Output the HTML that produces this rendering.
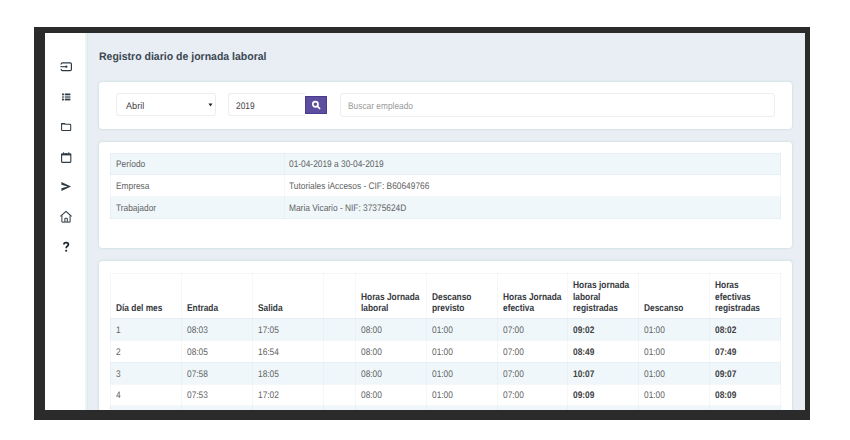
<!DOCTYPE html>
<html>
<head>
<meta charset="utf-8">
<style>
html,body{margin:0;padding:0;}
body{width:850px;height:440px;background:#fff;position:relative;overflow:hidden;font-family:"Liberation Sans",sans-serif;}
.frame{position:absolute;left:34px;top:27px;width:776px;height:393px;background:#2b2b2b;}
.inner{position:absolute;left:45px;top:33px;width:760px;height:377px;background:#e9eef5;overflow:hidden;}
.pg{position:absolute;left:-45px;top:-33px;width:850px;height:440px;}
.side{position:absolute;left:45px;top:33px;width:43px;height:377px;background:#fff;border-right:1px solid #dfe8ea;box-shadow:inset -2px 0 0 #eef3f4;box-sizing:border-box;}
.r{position:absolute;box-sizing:border-box;}
.t{position:absolute;white-space:nowrap;text-rendering:geometricPrecision;}
</style>
</head>
<body>
<div class="frame"></div>
<div class="inner"><div class="pg">
<div class="side"></div>
<div class="r" style="left:98px;top:81px;width:695px;height:49px;background:#fff;border:1px solid #dbe6e9;border-radius:4px;box-shadow:0 0 0 1px #e2ebee;"></div>
<div class="r" style="left:98px;top:141px;width:695px;height:108px;background:#fff;border:1px solid #dbe6e9;border-radius:4px;box-shadow:0 0 0 1px #e2ebee;"></div>
<div class="r" style="left:98px;top:260px;width:695px;height:200px;background:#fff;border:1px solid #dbe6e9;border-radius:4px;box-shadow:0 0 0 1px #e2ebee;"></div>
<div class="t" style="left:98.50px;top:51.59px;font-size:11px;line-height:11px;font-weight:bold;color:#3b4752;transform:scaleX(0.955);transform-origin:0 0;">Registro diario de jornada laboral</div>
<div class="r" style="left:116px;top:93px;width:100px;height:23px;background:#fff;border:1px solid #ededed;border-radius:3px;"></div>
<div class="t" style="left:126.00px;top:101.56px;font-size:9.5px;line-height:9.5px;font-weight:normal;color:#444;transform:scaleX(0.96);transform-origin:0 0;">Abril</div>
<svg class="r" style="left:208px;top:103px" width="5" height="4" viewBox="0 0 5 4"><path d="M0.5 0.5 L4.5 0.5 L2.5 3.5 Z" fill="#222"/></svg>
<div class="r" style="left:228px;top:93px;width:77px;height:23px;background:#fff;border:1px solid #ededed;border-right:none;border-radius:3px 0 0 3px;"></div>
<div class="t" style="left:236.00px;top:101.56px;font-size:9.5px;line-height:9.5px;font-weight:normal;color:#444;transform:scaleX(0.879);transform-origin:0 0;">2019</div>
<div class="r" style="left:305px;top:96px;width:22px;height:18px;background:#5d4d9e;border:1px solid #4b3b8e;"></div>
<svg class="r" style="left:310px;top:99px" width="12" height="12" viewBox="0 0 12 12"><circle cx="5.4" cy="5.3" r="2.6" fill="none" stroke="#fff" stroke-width="1.7"/><path d="M7.3 7.2 L9.6 9.5" stroke="#fff" stroke-width="1.7" stroke-linecap="round"/></svg>
<div class="r" style="left:339.5px;top:93px;width:435px;height:23.5px;background:#fff;border:1px solid #ededed;border-radius:3px;"></div>
<div class="t" style="left:347.60px;top:101.56px;font-size:9.5px;line-height:9.5px;font-weight:normal;color:#9a9a9a;transform:scaleX(0.879);transform-origin:0 0;">Buscar empleado</div>
<div class="r" style="left:110px;top:153px;width:671px;height:22px;background:#eff7fa;"></div>
<div class="r" style="left:110px;top:175px;width:671px;height:22px;background:#fff;"></div>
<div class="r" style="left:110px;top:197px;width:671px;height:22px;background:#eff7fa;"></div>
<div class="r" style="left:110px;top:153px;width:671px;height:1px;background:rgba(196,212,220,0.17);"></div>
<div class="r" style="left:110px;top:174px;width:671px;height:1px;background:rgba(196,212,220,0.17);"></div>
<div class="r" style="left:110px;top:196px;width:671px;height:1px;background:rgba(196,212,220,0.17);"></div>
<div class="r" style="left:110px;top:218px;width:671px;height:1px;background:rgba(196,212,220,0.17);"></div>
<div class="r" style="left:110px;top:153px;width:1px;height:66px;background:rgba(196,212,220,0.17);"></div>
<div class="r" style="left:284px;top:153px;width:1px;height:66px;background:rgba(196,212,220,0.17);"></div>
<div class="r" style="left:780px;top:153px;width:1px;height:66px;background:rgba(196,212,220,0.17);"></div>
<div class="t" style="left:115.70px;top:160.36px;font-size:9.5px;line-height:9.5px;font-weight:normal;color:#626262;transform:scaleX(0.879);transform-origin:0 0;">Período</div>
<div class="t" style="left:289.40px;top:160.36px;font-size:9.5px;line-height:9.5px;font-weight:normal;color:#626262;transform:scaleX(0.879);transform-origin:0 0;">01-04-2019 a 30-04-2019</div>
<div class="t" style="left:115.70px;top:182.36px;font-size:9.5px;line-height:9.5px;font-weight:normal;color:#626262;transform:scaleX(0.879);transform-origin:0 0;">Empresa</div>
<div class="t" style="left:289.40px;top:182.36px;font-size:9.5px;line-height:9.5px;font-weight:normal;color:#626262;transform:scaleX(0.879);transform-origin:0 0;">Tutoriales iAccesos - CIF: B60649766</div>
<div class="t" style="left:115.70px;top:204.36px;font-size:9.5px;line-height:9.5px;font-weight:normal;color:#626262;transform:scaleX(0.879);transform-origin:0 0;">Trabajador</div>
<div class="t" style="left:289.40px;top:204.36px;font-size:9.5px;line-height:9.5px;font-weight:normal;color:#626262;transform:scaleX(0.879);transform-origin:0 0;">Maria Vicario - NIF: 37375624D</div>
<div class="r" style="left:110px;top:318px;width:671px;height:23px;background:#eff7fa;"></div>
<div class="r" style="left:110px;top:340px;width:671px;height:23px;background:#fff;"></div>
<div class="r" style="left:110px;top:362px;width:671px;height:23px;background:#eff7fa;"></div>
<div class="r" style="left:110px;top:384px;width:671px;height:23px;background:#fff;"></div>
<div class="r" style="left:110px;top:406px;width:671px;height:23px;background:#eff7fa;"></div>
<div class="r" style="left:110px;top:273px;width:671px;height:1px;background:rgba(196,212,220,0.17);"></div>
<div class="r" style="left:110px;top:318px;width:671px;height:1px;background:rgba(196,212,220,0.17);"></div>
<div class="r" style="left:110px;top:340px;width:671px;height:1px;background:rgba(196,212,220,0.17);"></div>
<div class="r" style="left:110px;top:362px;width:671px;height:1px;background:rgba(196,212,220,0.17);"></div>
<div class="r" style="left:110px;top:384px;width:671px;height:1px;background:rgba(196,212,220,0.17);"></div>
<div class="r" style="left:110px;top:405px;width:671px;height:1px;background:rgba(196,212,220,0.17);"></div>
<div class="r" style="left:110px;top:273px;width:1px;height:200px;background:rgba(196,212,220,0.17);"></div>
<div class="r" style="left:181px;top:273px;width:1px;height:200px;background:rgba(196,212,220,0.17);"></div>
<div class="r" style="left:252px;top:273px;width:1px;height:200px;background:rgba(196,212,220,0.17);"></div>
<div class="r" style="left:323px;top:273px;width:1px;height:200px;background:rgba(196,212,220,0.17);"></div>
<div class="r" style="left:355px;top:273px;width:1px;height:200px;background:rgba(196,212,220,0.17);"></div>
<div class="r" style="left:426px;top:273px;width:1px;height:200px;background:rgba(196,212,220,0.17);"></div>
<div class="r" style="left:497px;top:273px;width:1px;height:200px;background:rgba(196,212,220,0.17);"></div>
<div class="r" style="left:567px;top:273px;width:1px;height:200px;background:rgba(196,212,220,0.17);"></div>
<div class="r" style="left:638px;top:273px;width:1px;height:200px;background:rgba(196,212,220,0.17);"></div>
<div class="r" style="left:709px;top:273px;width:1px;height:200px;background:rgba(196,212,220,0.17);"></div>
<div class="r" style="left:780px;top:273px;width:1px;height:200px;background:rgba(196,212,220,0.17);"></div>
<div class="t" style="left:115.50px;top:304.10px;font-size:9.8px;line-height:9.8px;font-weight:bold;color:#34383c;transform:scaleX(0.852);transform-origin:0 0;">Día del mes</div>
<div class="t" style="left:186.50px;top:304.10px;font-size:9.8px;line-height:9.8px;font-weight:bold;color:#34383c;transform:scaleX(0.852);transform-origin:0 0;">Entrada</div>
<div class="t" style="left:257.50px;top:304.10px;font-size:9.8px;line-height:9.8px;font-weight:bold;color:#34383c;transform:scaleX(0.852);transform-origin:0 0;">Salida</div>
<div class="t" style="left:360.50px;top:292.70px;font-size:9.8px;line-height:9.8px;font-weight:bold;color:#34383c;transform:scaleX(0.852);transform-origin:0 0;">Horas Jornada</div>
<div class="t" style="left:360.50px;top:304.10px;font-size:9.8px;line-height:9.8px;font-weight:bold;color:#34383c;transform:scaleX(0.852);transform-origin:0 0;">laboral</div>
<div class="t" style="left:431.50px;top:292.70px;font-size:9.8px;line-height:9.8px;font-weight:bold;color:#34383c;transform:scaleX(0.852);transform-origin:0 0;">Descanso</div>
<div class="t" style="left:431.50px;top:304.10px;font-size:9.8px;line-height:9.8px;font-weight:bold;color:#34383c;transform:scaleX(0.852);transform-origin:0 0;">previsto</div>
<div class="t" style="left:502.50px;top:292.70px;font-size:9.8px;line-height:9.8px;font-weight:bold;color:#34383c;transform:scaleX(0.852);transform-origin:0 0;">Horas Jornada</div>
<div class="t" style="left:502.50px;top:304.10px;font-size:9.8px;line-height:9.8px;font-weight:bold;color:#34383c;transform:scaleX(0.852);transform-origin:0 0;">efectiva</div>
<div class="t" style="left:572.50px;top:281.30px;font-size:9.8px;line-height:9.8px;font-weight:bold;color:#34383c;transform:scaleX(0.852);transform-origin:0 0;">Horas jornada</div>
<div class="t" style="left:572.50px;top:292.70px;font-size:9.8px;line-height:9.8px;font-weight:bold;color:#34383c;transform:scaleX(0.852);transform-origin:0 0;">laboral</div>
<div class="t" style="left:572.50px;top:304.10px;font-size:9.8px;line-height:9.8px;font-weight:bold;color:#34383c;transform:scaleX(0.852);transform-origin:0 0;">registradas</div>
<div class="t" style="left:643.50px;top:304.10px;font-size:9.8px;line-height:9.8px;font-weight:bold;color:#34383c;transform:scaleX(0.852);transform-origin:0 0;">Descanso</div>
<div class="t" style="left:714.50px;top:281.30px;font-size:9.8px;line-height:9.8px;font-weight:bold;color:#34383c;transform:scaleX(0.852);transform-origin:0 0;">Horas</div>
<div class="t" style="left:714.50px;top:292.70px;font-size:9.8px;line-height:9.8px;font-weight:bold;color:#34383c;transform:scaleX(0.852);transform-origin:0 0;">efectivas</div>
<div class="t" style="left:714.50px;top:304.10px;font-size:9.8px;line-height:9.8px;font-weight:bold;color:#34383c;transform:scaleX(0.852);transform-origin:0 0;">registradas</div>
<div class="t" style="left:115.50px;top:325.96px;font-size:9.5px;line-height:9.5px;font-weight:normal;color:#626262;transform:scaleX(0.879);transform-origin:0 0;">1</div>
<div class="t" style="left:186.50px;top:325.96px;font-size:9.5px;line-height:9.5px;font-weight:normal;color:#626262;transform:scaleX(0.879);transform-origin:0 0;">08:03</div>
<div class="t" style="left:257.50px;top:325.96px;font-size:9.5px;line-height:9.5px;font-weight:normal;color:#626262;transform:scaleX(0.879);transform-origin:0 0;">17:05</div>
<div class="t" style="left:360.50px;top:325.96px;font-size:9.5px;line-height:9.5px;font-weight:normal;color:#626262;transform:scaleX(0.879);transform-origin:0 0;">08:00</div>
<div class="t" style="left:431.50px;top:325.96px;font-size:9.5px;line-height:9.5px;font-weight:normal;color:#626262;transform:scaleX(0.879);transform-origin:0 0;">01:00</div>
<div class="t" style="left:502.50px;top:325.96px;font-size:9.5px;line-height:9.5px;font-weight:normal;color:#626262;transform:scaleX(0.879);transform-origin:0 0;">07:00</div>
<div class="t" style="left:572.50px;top:325.96px;font-size:9.5px;line-height:9.5px;font-weight:bold;color:#404040;transform:scaleX(0.879);transform-origin:0 0;">09:02</div>
<div class="t" style="left:643.50px;top:325.96px;font-size:9.5px;line-height:9.5px;font-weight:normal;color:#626262;transform:scaleX(0.879);transform-origin:0 0;">01:00</div>
<div class="t" style="left:714.50px;top:325.96px;font-size:9.5px;line-height:9.5px;font-weight:bold;color:#404040;transform:scaleX(0.879);transform-origin:0 0;">08:02</div>
<div class="t" style="left:115.50px;top:347.74px;font-size:9.5px;line-height:9.5px;font-weight:normal;color:#626262;transform:scaleX(0.879);transform-origin:0 0;">2</div>
<div class="t" style="left:186.50px;top:347.74px;font-size:9.5px;line-height:9.5px;font-weight:normal;color:#626262;transform:scaleX(0.879);transform-origin:0 0;">08:05</div>
<div class="t" style="left:257.50px;top:347.74px;font-size:9.5px;line-height:9.5px;font-weight:normal;color:#626262;transform:scaleX(0.879);transform-origin:0 0;">16:54</div>
<div class="t" style="left:360.50px;top:347.74px;font-size:9.5px;line-height:9.5px;font-weight:normal;color:#626262;transform:scaleX(0.879);transform-origin:0 0;">08:00</div>
<div class="t" style="left:431.50px;top:347.74px;font-size:9.5px;line-height:9.5px;font-weight:normal;color:#626262;transform:scaleX(0.879);transform-origin:0 0;">01:00</div>
<div class="t" style="left:502.50px;top:347.74px;font-size:9.5px;line-height:9.5px;font-weight:normal;color:#626262;transform:scaleX(0.879);transform-origin:0 0;">07:00</div>
<div class="t" style="left:572.50px;top:347.74px;font-size:9.5px;line-height:9.5px;font-weight:bold;color:#404040;transform:scaleX(0.879);transform-origin:0 0;">08:49</div>
<div class="t" style="left:643.50px;top:347.74px;font-size:9.5px;line-height:9.5px;font-weight:normal;color:#626262;transform:scaleX(0.879);transform-origin:0 0;">01:00</div>
<div class="t" style="left:714.50px;top:347.74px;font-size:9.5px;line-height:9.5px;font-weight:bold;color:#404040;transform:scaleX(0.879);transform-origin:0 0;">07:49</div>
<div class="t" style="left:115.50px;top:369.52px;font-size:9.5px;line-height:9.5px;font-weight:normal;color:#626262;transform:scaleX(0.879);transform-origin:0 0;">3</div>
<div class="t" style="left:186.50px;top:369.52px;font-size:9.5px;line-height:9.5px;font-weight:normal;color:#626262;transform:scaleX(0.879);transform-origin:0 0;">07:58</div>
<div class="t" style="left:257.50px;top:369.52px;font-size:9.5px;line-height:9.5px;font-weight:normal;color:#626262;transform:scaleX(0.879);transform-origin:0 0;">18:05</div>
<div class="t" style="left:360.50px;top:369.52px;font-size:9.5px;line-height:9.5px;font-weight:normal;color:#626262;transform:scaleX(0.879);transform-origin:0 0;">08:00</div>
<div class="t" style="left:431.50px;top:369.52px;font-size:9.5px;line-height:9.5px;font-weight:normal;color:#626262;transform:scaleX(0.879);transform-origin:0 0;">01:00</div>
<div class="t" style="left:502.50px;top:369.52px;font-size:9.5px;line-height:9.5px;font-weight:normal;color:#626262;transform:scaleX(0.879);transform-origin:0 0;">07:00</div>
<div class="t" style="left:572.50px;top:369.52px;font-size:9.5px;line-height:9.5px;font-weight:bold;color:#404040;transform:scaleX(0.879);transform-origin:0 0;">10:07</div>
<div class="t" style="left:643.50px;top:369.52px;font-size:9.5px;line-height:9.5px;font-weight:normal;color:#626262;transform:scaleX(0.879);transform-origin:0 0;">01:00</div>
<div class="t" style="left:714.50px;top:369.52px;font-size:9.5px;line-height:9.5px;font-weight:bold;color:#404040;transform:scaleX(0.879);transform-origin:0 0;">09:07</div>
<div class="t" style="left:115.50px;top:391.30px;font-size:9.5px;line-height:9.5px;font-weight:normal;color:#626262;transform:scaleX(0.879);transform-origin:0 0;">4</div>
<div class="t" style="left:186.50px;top:391.30px;font-size:9.5px;line-height:9.5px;font-weight:normal;color:#626262;transform:scaleX(0.879);transform-origin:0 0;">07:53</div>
<div class="t" style="left:257.50px;top:391.30px;font-size:9.5px;line-height:9.5px;font-weight:normal;color:#626262;transform:scaleX(0.879);transform-origin:0 0;">17:02</div>
<div class="t" style="left:360.50px;top:391.30px;font-size:9.5px;line-height:9.5px;font-weight:normal;color:#626262;transform:scaleX(0.879);transform-origin:0 0;">08:00</div>
<div class="t" style="left:431.50px;top:391.30px;font-size:9.5px;line-height:9.5px;font-weight:normal;color:#626262;transform:scaleX(0.879);transform-origin:0 0;">01:00</div>
<div class="t" style="left:502.50px;top:391.30px;font-size:9.5px;line-height:9.5px;font-weight:normal;color:#626262;transform:scaleX(0.879);transform-origin:0 0;">07:00</div>
<div class="t" style="left:572.50px;top:391.30px;font-size:9.5px;line-height:9.5px;font-weight:bold;color:#404040;transform:scaleX(0.879);transform-origin:0 0;">09:09</div>
<div class="t" style="left:643.50px;top:391.30px;font-size:9.5px;line-height:9.5px;font-weight:normal;color:#626262;transform:scaleX(0.879);transform-origin:0 0;">01:00</div>
<div class="t" style="left:714.50px;top:391.30px;font-size:9.5px;line-height:9.5px;font-weight:bold;color:#404040;transform:scaleX(0.879);transform-origin:0 0;">08:09</div>

<svg class="r" style="left:59px;top:60px" width="15" height="13" viewBox="0 0 15 13">
 <path d="M2.2 4.4 V4 Q2.2 2.8 3.4 2.8 H11.2 Q12.4 2.8 12.4 4 V9.4 Q12.4 10.6 11.2 10.6 H3.4 Q2.2 10.6 2.2 9.4 V9" fill="none" stroke="#2e3b44" stroke-width="1.2"/>
 <path d="M1.4 6.7 H7.3" stroke="#2e3b44" stroke-width="1.1"/>
 <circle cx="7.4" cy="6.7" r="1.15" fill="#2e3b44"/>
</svg>
<svg class="r" style="left:60px;top:92px" width="12" height="10" viewBox="0 0 12 10">
 <rect x="2" y="1.5" width="1.9" height="1.8" fill="#2e3b44"/><rect x="4.8" y="1.5" width="5.6" height="1.8" fill="#2e3b44"/>
 <rect x="2" y="4.2" width="1.9" height="1.6" fill="#2e3b44" opacity=".75"/><rect x="4.8" y="4.2" width="5.6" height="1.6" fill="#2e3b44" opacity=".75"/>
 <rect x="2" y="6.6" width="1.9" height="1.8" fill="#2e3b44"/><rect x="4.8" y="6.6" width="5.6" height="1.8" fill="#2e3b44"/>
</svg>
<svg class="r" style="left:59px;top:121px" width="14" height="12" viewBox="0 0 14 12">
 <path d="M2.6 2.5 H5.6 L6.6 3.3 H11.1 Q11.7 3.3 11.7 3.9 V8.9 Q11.7 9.5 11.1 9.5 H3.2 Q2.6 9.5 2.6 8.9 Z" fill="none" stroke="#2e3b44" stroke-width="1.05"/>
 <path d="M2.4 2.4 H5.6 L6.4 3.4 H2.4 Z" fill="#2e3b44"/>
</svg>
<svg class="r" style="left:59px;top:151px" width="14" height="13" viewBox="0 0 14 13">
 <rect x="2.6" y="3" width="9.2" height="8.4" rx="0.6" fill="none" stroke="#2e3b44" stroke-width="1.1"/>
 <rect x="2.3" y="2.6" width="9.8" height="1.8" fill="#2e3b44"/>
 <circle cx="7.2" cy="3.1" r="1.1" fill="#2e3b44"/>
 <path d="M4.6 1.2 V3" stroke="#2e3b44" stroke-width="0.9"/><path d="M9.8 1.2 V3" stroke="#2e3b44" stroke-width="0.9"/>
</svg>
<svg class="r" style="left:59px;top:180px" width="14" height="13" viewBox="0 0 14 13">
 <path d="M2.4 2 L12 6.5 L2.4 11 L2.4 8.3 L8.6 6.5 L2.4 4.7 Z" fill="#2e3b44"/>
</svg>
<svg class="r" style="left:58px;top:209px" width="16" height="15" viewBox="0 0 16 15">
 <path d="M2.4 7.4 L8 2.3 L13.6 7.4" fill="none" stroke="#2e3b44" stroke-width="1.1" stroke-linejoin="round"/>
 <path d="M3.9 6.4 V13.1 H12.1 V6.4" fill="none" stroke="#2e3b44" stroke-width="1"/>
 <path d="M6.9 13 V9.3 H9.3 V13" fill="none" stroke="#2e3b44" stroke-width="1"/>
</svg>

<svg class="r" style="left:60px;top:240px" width="12" height="14" viewBox="0 0 12 14"><path d="M3.9 4.6 Q3.9 2.6 6.2 2.6 Q8.4 2.6 8.4 4.5 Q8.4 5.6 7.2 6.3 Q6.2 6.9 6.2 8.3" fill="none" stroke="#1c2830" stroke-width="1.75" stroke-linecap="butt"/><circle cx="6.2" cy="10.75" r="1.05" fill="#1c2830"/></svg>
</div></div>
</body>
</html>
